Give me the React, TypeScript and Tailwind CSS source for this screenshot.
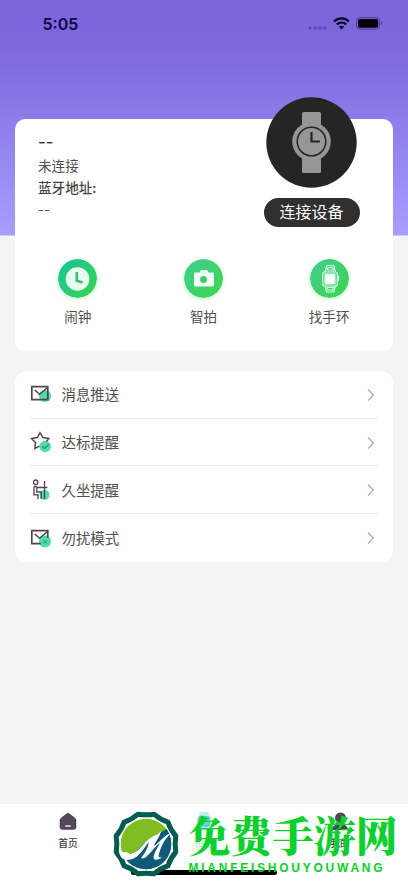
import type { ReactNode } from "react";

function StatusBar() {
  return (
    <div className="flex h-[47px] items-center justify-between pl-[42.5px] pr-[25px] text-[#130648]">
      <span className="pt-px font-[Inter] text-[16px] font-semibold leading-none">5:05</span>
      <div className="flex items-center">
        <svg className="mr-[6px] mt-[8px]" width="19" height="4" viewBox="0 0 19 4" fill="#5b45b4">
          <circle cx="2" cy="2" r="1.6" />
          <circle cx="7" cy="2" r="1.6" />
          <circle cx="12" cy="2" r="1.6" />
          <circle cx="17" cy="2" r="1.6" />
        </svg>
        <svg className="mr-[6px]" width="17" height="13" viewBox="0 0 17 13" fill="none" stroke="#08031f">
          <path d="M1 4.5C5.2.4 11.8.4 16 4.5" strokeWidth="2.3" />
          <path d="M3.8 7.4c2.7-2.5 6.7-2.5 9.4 0" strokeWidth="2.2" />
          <path d="M5.9 9.7c1.5-1.3 3.7-1.3 5.2 0L8.5 12.4z" fill="#08031f" stroke="none" />
        </svg>
        <svg width="27" height="13" viewBox="0 0 27 13">
          <rect x=".6" y=".6" width="23" height="11.5" rx="3.5" fill="none" stroke="#4e3c92" />
          <rect x="2" y="2" width="20.2" height="8.7" rx="2" fill="#050309" />
          <path d="M25 4.5c1.5.5 1.5 3.3 0 3.8z" fill="#4e3c92" />
        </svg>
      </div>
    </div>
  );
}

function WatchDial() {
  return (
    <svg width="91" height="91" viewBox="0 0 91 91">
      <circle cx="45.5" cy="45.5" r="45.2" fill="#252525" />
      <g fill="#969696">
        <rect x="36" y="15" width="19" height="61" rx="1.5" />
        <circle cx="45.5" cy="44.5" r="19.3" />
      </g>
      <circle cx="45.5" cy="44.5" r="14.3" fill="none" stroke="#252525" strokeWidth="1.5" />
      <path d="M45.5 35v9.5H54" fill="none" stroke="#252525" strokeWidth="2.2" />
    </svg>
  );
}

function RoundIcon({ id, children }: { id: string; children: ReactNode }) {
  return (
    <svg className="rounded-full shadow-[0_1px_4px_#b9f6c5]" width="39" height="39" viewBox="0 0 39 39">
      <defs>
        <linearGradient id={id} x1="0" y1="0" x2="1" y2="1">
          <stop offset="0.1" stopColor={id === "alarm" ? "#18c497" : "#42cd8b"} />
          <stop offset="1" stopColor="#3bd64d" />
        </linearGradient>
      </defs>
      <circle cx="19.5" cy="19.5" r="19.5" fill={`url(#${id})`} />
      {children}
    </svg>
  );
}

const actions = [
  {
    label: "闹钟",
    icon: (
      <RoundIcon id="alarm">
        <circle cx="19.5" cy="20" r="11.8" fill="#e8fcef" />
        <path d="M18.800 13v8.800l5.800 1.800" fill="none" stroke="#3dbb7a" strokeWidth="2.6" />
      </RoundIcon>
    ),
  },
  {
    label: "智拍",
    icon: (
      <RoundIcon id="camera">
        <path d="M10.500 13.500h5l1.500-2.500h6l1.700 2.500h3.800q1.500 0 1.500 1.500v11q0 1.500-1.500 1.500h-17q-1.500 0-1.500-1.500V15z" fill="#f2fff6" />
        <circle cx="19.5" cy="20.5" r="3.5" fill="#42c978" />
      </RoundIcon>
    ),
  },
  {
    label: "找手环",
    icon: (
      <RoundIcon id="band">
        <g fill="none" stroke="#d9fbe4" strokeWidth="1.2" strokeLinejoin="round">
          <path d="m15 13 1.700-6.500h7L25.500 13M15 27l1.700 6h7l1.800-6" />
          <path d="m17 11 1-2.500h4.500l1 2.500zM17 28.500l1 2.500h4.500l1-2.500z" />
          <rect x="12.8" y="13" width="14.5" height="14" rx="2" />
          <rect x="15" y="15" width="10" height="10" fill="#fff" />
          <path d="M28.500 17v5" />
        </g>
      </RoundIcon>
    ),
  },
];

function Envelope({ muted }: { muted?: boolean }) {
  return (
    <svg width="22" height="20" viewBox="0 0 22 20" fill="none">
      <circle cx="15" cy={muted ? 13.5 : 12} r="6" fill="#4ddda6" />
      <path d={muted ? "M17.800 10V2.700h-16v13h9" : "M1.800 2.700h16v13h-16z"} stroke="#50454f" strokeWidth="1.7" />
      <path d="m4.800 6 4.700 4.200 8.300-7" stroke="#50454f" strokeWidth="1.5" />
      {muted && <path d="m13 12 4 3.500m0-3.500-4 3.500" stroke="#259b77" />}
    </svg>
  );
}

const settings = [
  { label: "消息推送", icon: <Envelope /> },
  {
    label: "达标提醒",
    icon: (
      <svg width="22" height="22" viewBox="0 0 22 22" fill="none">
        <circle cx="15.2" cy="15.5" r="5.8" fill="#55dda9" />
        <path d="M16.500 10.500 18.700 7.500 13 6.600 10 1.700 7.400 6.600l-5.800 1 4 4.100-.7 5.700 4.600-2.300" stroke="#50454f" strokeWidth="1.5" />
        <path d="m12.200 15.200 2.300 2.300 4.300-4" stroke="#21906f" strokeWidth="1.2" />
      </svg>
    ),
  },
  {
    label: "久坐提醒",
    icon: (
      <svg width="22" height="22" viewBox="0 0 22 22" fill="none">
        <circle cx="14.5" cy="16" r="5" fill="#55dda9" />
        <g stroke="#50454f" strokeWidth="1.3">
          <circle cx="5.7" cy="3.2" r="2.2" />
          <path d="M4 7.500v8.300h3.500M6.800 7.500V13h4.500v7M8 15v5M6.800 8.500h10.500M14.500 2v18M4 7.500h2.800" />
        </g>
      </svg>
    ),
  },
  { label: "勿扰模式", icon: <Envelope muted /> },
];

function DeviceCard() {
  return (
    <section className="mx-auto mt-[72px] h-[232px] w-[378px] rounded-[10px] bg-white">
      <div className="flex h-[136px] justify-between pl-[23px] pr-[33.5px]">
        <div className="pt-3 text-[13.6px] leading-[22.5px] text-[#505050]">
          <div className="font-[Inter] text-[17px] text-[#333]">--</div>
          <div>未连接</div>
          <div className="font-medium text-[#444]">蓝牙地址:</div>
          <div className="font-[Inter] text-[13px]">--</div>
        </div>
        <div className="-mt-[22px] flex w-[96px] flex-col items-center">
          <WatchDial />
          <button className="mt-[10px] h-[29px] w-[96px] shrink-0 rounded-full bg-[#303030] pb-[3px] text-[16px] leading-[26px] text-white">
            连接设备
          </button>
        </div>
      </div>
      <div className="grid grid-cols-3 pr-px pt-[4px]">
        {actions.map((action) => (
          <div key={action.label} className="flex flex-col items-center">
            {action.icon}
            <span className="mt-2 text-[13.6px] leading-5 text-[#505050]">{action.label}</span>
          </div>
        ))}
      </div>
    </section>
  );
}

function SettingsCard() {
  return (
    <section className="mx-auto mt-5 w-[378px] rounded-xl bg-white px-[15px]">
      {settings.map((item) => (
        <div key={item.label} className="flex h-[47.7px] items-center border-b border-[#eaeaea] last:border-b-0">
          <span className="flex w-[31.5px] shrink-0">{item.icon}</span>
          <span className="flex-1 text-[14.4px] leading-5 text-[#505050]">{item.label}</span>
          <svg className="mr-[2px] mt-px" width="10" height="14" viewBox="0 0 10 14" fill="none" stroke="#aaa" strokeWidth="1.2">
            <path d="m2 1.500 5.500 5.500L2 12.500" />
          </svg>
        </div>
      ))}
    </section>
  );
}

function TabBar() {
  return (
    <nav className="grid h-[79px] grid-cols-3 bg-white text-[9.8px] leading-[14px] text-[#403b43]">
      <div className="flex flex-col items-center pt-[8px]">
        <svg width="18" height="19" viewBox="0 0 18 19">
          <path d="M9 1c1 0 2 1 3 1.800l4 3q1.300 1 1.300 2.500v6.500q0 3-3 3H3.700q-3 0-3-3V8.300q0-1.500 1.300-2.500l4-3C7 2 8 1 9 1z" fill="#504657" />
          <path d="M6.200 14h5.600" stroke="#fff" strokeWidth="1.3" />
        </svg>
        <span className="mt-[5px] font-medium">首页</span>
      </div>
      <div className="flex flex-col items-center pt-[8px] text-[#9ee8d8]">
        <svg width="18" height="19" viewBox="0 0 18 19">
          <rect x="4" y="0" width="10" height="18" rx="2" fill="#b8efee" />
          <rect x="2.5" y="4" width="13" height="11" rx="3" fill="#65cfdc" />
        </svg>
        <span className="mt-[5px]">设备</span>
      </div>
      <div className="flex flex-col items-center pt-[8px]">
        <svg width="18" height="19" viewBox="0 0 18 19" fill="#504657">
          <circle cx="9.5" cy="6" r="5.5" />
          <path d="M1 18c0-8 16-8 16 0z" />
        </svg>
        <span className="mt-[5px] font-medium">我的</span>
      </div>
    </nav>
  );
}

const badge =
  "M42 4.200Q48.500 9.800 55.900 12.100Q58.200 19.500 63.800 26Q62.500 34 63.800 42Q58.200 48.500 55.900 55.900Q48.500 58.200 42 63.800Q34 62.500 26 63.800Q19.500 58.200 12.100 55.900Q9.800 48.500 4.200 42Q5.500 34 4.200 26Q9.800 19.500 12.100 12.100Q19.500 9.800 26 4.200Q34 5.500 42 4.200z";

function BrandOverlay() {
  return (
    <div className="absolute bottom-0 left-[112px] flex h-[75px] w-[296px] items-start">
      <svg className="mt-[2px] shrink-0" width="68" height="68" viewBox="0 0 68 68">
        <defs>
          <clipPath id="badge-inner">
            <circle cx="34" cy="34" r="25.3" />
          </clipPath>
        </defs>
        <path d={badge} fill="#fff" stroke="#005c50" strokeWidth="5" strokeLinejoin="round" />
        <g clipPath="url(#badge-inner)">
          <path d="M0 0h68v68H0z" fill="#80bd23" />
          <path d="M6 48c18 1 22-14 34-21 8-3 12-8 20-10l8 2v49H6z" fill="#10597a" />
        </g>
        <path d="M7 42c3-2 4 1 7 0 2 0 2 2 5 2 9-2 13-13 21-17 3-2 6-2 9-6-1 6-5 9-7 15 6-4 9-10 17-13-8 8-10 14-12 21-1 3 0 4 3 3-4 4-10 4-8-2 1-4 4-8 6-12-6 4-8 9-13 13-2 2-4 3-6 2 4-5 7-10 8-16-7 8-11 18-22 18-4 0-7-3-8-8z" fill="#fff" />
      </svg>
      <div className="pl-[8.5px] text-[#0bd02d]">
        <div className="whitespace-nowrap font-['Noto_Serif_CJK_SC','Noto_Sans_CJK_SC',serif] text-[41.8px] font-black leading-[52px]">免费手游网</div>
        <div className="mt-px whitespace-nowrap font-['Liberation_Sans',sans-serif] text-[12px] font-bold leading-[14px] tracking-[2.75px]">
          MIANFEISHOUYOUWANG
        </div>
      </div>
    </div>
  );
}

export default function App() {
  return (
    <div className="relative flex h-[883px] w-[408px] flex-col overflow-hidden bg-[linear-gradient(180deg,#7b66db_0px,#7c67dc_45px,#a99dff_235px,#f4f4f4_236px)] font-['Noto_Sans_CJK_SC',sans-serif]">
      <StatusBar />
      <main className="flex-1">
        <DeviceCard />
        <SettingsCard />
      </main>
      <TabBar />
      <div className="absolute bottom-[8px] left-[131px] h-[5px] w-[146px] rounded-full bg-black" />
      <BrandOverlay />
    </div>
  );
}
